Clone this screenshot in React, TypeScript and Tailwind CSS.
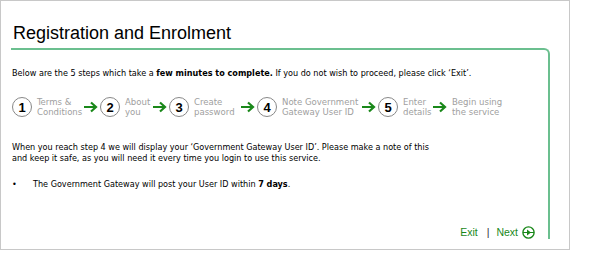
import React from "react";

function Arrow({ after = 1 }: { after?: number }) {
  return (
    <svg
      width="16"
      height="12"
      viewBox="0 0 16 12"
      className={after === 1 ? "shrink-0 ml-[2px] mr-[1px]" : "shrink-0 ml-[2px] mr-[4px]"}
    >
      <path d="M1 6h12M8 1.5l5 4.5-5 4.5" stroke="#1a881a" strokeWidth="2.2" fill="none" />
    </svg>
  );
}

function Step({ n, a, b, w }: { n?: number; a: string; b: string; w: string }) {
  return (
    <div className="flex items-center">
      {n && (
        <div className="w-[20px] h-[20px] rounded-full border border-[#888] flex items-center justify-center text-[13px] font-bold text-black mr-[5px] font-['Liberation_Sans',sans-serif]">
          {n}
        </div>
      )}
      <div className={`${w} text-[9.5px] leading-[10px] text-[#a0a0a0] whitespace-nowrap`}>
        <div>{a}</div>
        <div>{b}</div>
      </div>
    </div>
  );
}

export default function App() {
  return (
    <div className="w-[570px] h-[250px] border border-[#c8c8c8] bg-white font-['DejaVu_Sans_Condensed','DejaVu_Sans',sans-serif] text-black">
      <h1 className="pl-[12px] pt-[21px] text-[18px] leading-[22px] font-['Liberation_Sans',sans-serif]">
        Registration and Enrolment
      </h1>
      <div className="ml-[10px] mr-[19px] mt-[4px] h-[191px] border-t-2 border-r-2 border-[#6bbf8f] rounded-tr-[6px] pt-[18px] pl-[1px] pr-[10px] flex flex-col text-[9px] leading-[11px]">
        <p className="whitespace-nowrap">
          Below are the 5 steps which take a <b>few minutes to complete.</b> If you do not wish to proceed, please click ‘Exit’.
        </p>
        <div className="flex items-center mt-[18px]">
          <Step n={1} a="Terms &" b="Conditions" w="w-[44px]" />
          <Arrow />
          <Step n={2} a="About" b="you" w="w-[25px]" />
          <Arrow />
          <Step n={3} a="Create" b="password" w="w-[44px]" />
          <Arrow />
          <Step n={4} a="Note Government" b="Gateway User ID" w="w-[77px]" />
          <Arrow />
          <Step n={5} a="Enter" b="details" w="w-[27px]" />
          <Arrow after={2} />
          <Step a="Begin using" b="the service" w="w-[60px]" />
        </div>
        <p className="mt-[25px] whitespace-nowrap">
          When you reach step 4 we will display your ‘Government Gateway User ID’. Please make a note of this
          <br />
          and keep it safe, as you will need it every time you login to use this service.
        </p>
        <div className="flex mt-[15px]">
          <span className="w-[21px]">•</span>
          <span>
            The Government Gateway will post your User ID within <b>7 days</b>.
          </span>
        </div>
        <div className="mt-auto flex justify-end items-center text-[10.5px] text-[#1a881a] font-['Liberation_Sans',sans-serif] pr-[3px]">
          <span>Exit</span>
          <span className="text-[#333] ml-[9px] mr-[7px]">|</span>
          <span className="flex items-center gap-[4px]">
            Next
            <svg width="13" height="13" viewBox="0 0 13 13">
              <circle cx="6.5" cy="6.5" r="5.6" stroke="#1a881a" strokeWidth="1.4" fill="none" />
              <path d="M1 6.5h11" stroke="#1a881a" strokeWidth="1" />
              <path d="M5 3.5l4 3-4 3z" fill="#1a881a" />
            </svg>
          </span>
        </div>
      </div>
    </div>
  );
}
